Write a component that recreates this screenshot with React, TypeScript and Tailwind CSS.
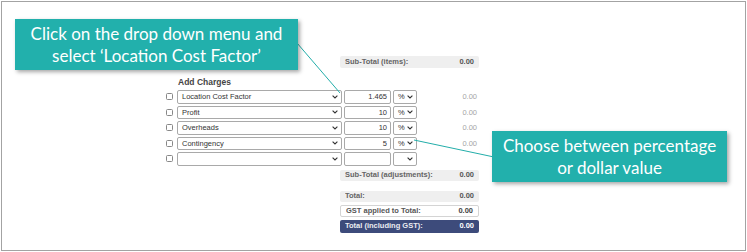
import { ChevronDown } from "lucide-react";

// region data
const cargos = ["Location Cost Factor", "Profit", "Overheads", "Contingency", ""];
const valores = ["1.465", "10", "10", "5", ""];
const unidades = ["%", "%", "%", "%", ""];
// endregion

function Chevron() {
  return (
    <svg width="6" height="4" viewBox="0 0 6 4" className="shrink-0">
      <path d="M0.6 0.6 L3 3 L5.4 0.6" fill="none" stroke="#333" strokeWidth="1.1" />
    </svg>
  );
}

function FilaTotal({ etiqueta, variante }: { etiqueta: string; variante: "gris" | "borde" | "azul" }) {
  const estilos =
    variante === "gris"
      ? "bg-[#efefef] text-[#555]"
      : variante === "borde"
      ? "bg-white border border-[#d4d4d4] text-[#444]"
      : "bg-[#3d4b7b] text-white";
  return (
    <div
      className={`flex items-center justify-between w-[139px] rounded-[2px] px-[5px] text-[7.5px] font-bold ${estilos}`}
    >
      <span className="opacity-90">{etiqueta}</span>
      <span>0.00</span>
    </div>
  );
}

export default function App() {
  return (
    <div className="w-[747px] h-[252px] bg-white pt-px pl-px font-['Liberation_Sans',Arial,sans-serif]">
      <div className="relative w-[745px] h-[250px] border-[1.5px] border-[#a3a3a3]">
        {/* Formulario */}
        <div className="flex flex-col pt-[54px]">
          <div className="ml-[338px] h-[12px] flex">
            <FilaTotal etiqueta="Sub-Total (items):" variante="gris" />
          </div>

          <div className="ml-[176px] mt-[8px] h-[12px] text-[8.5px] font-bold text-[#444] leading-[12px]">
            Add Charges
          </div>

          <div className="flex flex-col gap-[2px] mt-[2px]">
            {cargos.map((cargo, i) => (
              <div key={i} className="flex items-center h-[13.5px] ml-[164px]">
                <div className="w-[7px] h-[7px] border border-[#888] rounded-[1.5px] bg-white" />
                <div className="ml-[4px] w-[165px] h-full flex items-center justify-between border border-[#a9a9a9] rounded-[2px] pl-[4px] pr-[3px] text-[7.5px] text-[#333]">
                  <span>{cargo}</span>
                  <Chevron />
                </div>
                <div className="ml-[2px] w-[47px] h-full flex items-center justify-end border border-[#a9a9a9] rounded-[2px] pr-[3px] text-[7.5px] text-[#333]">
                  {valores[i]}
                </div>
                <div className="ml-[2px] w-[24px] h-full flex items-center justify-between border border-[#a9a9a9] rounded-[2px] pl-[4px] pr-[3px] text-[7.5px] text-[#333]">
                  <span>{unidades[i]}</span>
                  <Chevron />
                </div>
                {cargo && (
                  <div className="w-[60px] text-right text-[7.5px] text-[#a5a5a5]">0.00</div>
                )}
              </div>
            ))}
          </div>

          <div className="ml-[338px] mt-[4px] h-[11px] flex">
            <FilaTotal etiqueta="Sub-Total (adjustments):" variante="gris" />
          </div>
          <div className="ml-[338px] mt-[10px] h-[11px] flex">
            <FilaTotal etiqueta="Total:" variante="gris" />
          </div>
          <div className="ml-[338px] mt-[3px] h-[12px] flex">
            <FilaTotal etiqueta="GST applied to Total:" variante="borde" />
          </div>
          <div className="ml-[338px] mt-[3px] h-[13px] flex">
            <FilaTotal etiqueta="Total (including GST):" variante="azul" />
          </div>
        </div>

        {/* Líneas de las llamadas */}
        <svg className="absolute left-0 top-0 pointer-events-none" width="745" height="250">
          <line x1="295" y1="41" x2="338" y2="91" stroke="#23aeaa" strokeWidth="1" />
          <line x1="412" y1="138" x2="492" y2="155" stroke="#23aeaa" strokeWidth="1" />
        </svg>

        {/* Llamada 1 */}
        <div className="absolute left-[13px] top-[17px] w-[283px] h-[51px] bg-[#22b0ac] shadow-[2px_2px_4px_rgba(0,0,0,0.35)] flex flex-col items-center justify-center text-white text-[17px] leading-[22px] font-['Lato',sans-serif]">
          <span>Click on the drop down menu and</span>
          <span>select ‘Location Cost Factor’</span>
        </div>

        {/* Llamada 2 */}
        <div className="absolute left-[490px] top-[129px] w-[235px] h-[51px] bg-[#22b0ac] shadow-[2px_2px_4px_rgba(0,0,0,0.35)] flex flex-col items-center justify-center text-white text-[17px] leading-[22px] font-['Lato',sans-serif]">
          <span>Choose between percentage</span>
          <span>or dollar value</span>
        </div>
      </div>
    </div>
  );
}
